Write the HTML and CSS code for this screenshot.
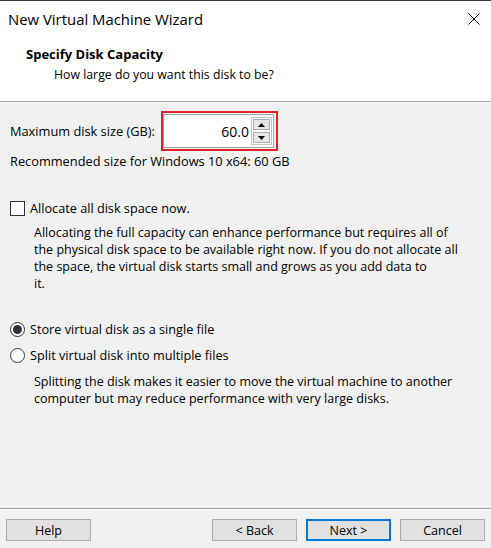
FILE: index.html
```html
<!DOCTYPE html>
<html lang="en">
<head>
<meta charset="utf-8">
<title>New Virtual Machine Wizard</title>
<link rel="stylesheet" href="styles.css">
</head>
<body>
<div class="window">
  <div class="top">
    <div class="titlebar">
      <span class="title">New Virtual Machine Wizard</span>
      <span class="close">
        <svg width="12" height="12" viewBox="0 0 12 12"><path d="M0.5 0.5 L11.5 11.5 M11.5 0.5 L0.5 11.5" stroke="#000" stroke-width="1" fill="none"/></svg>
      </span>
    </div>
    <div class="header">
      <div class="heading">Specify Disk Capacity</div>
      <div class="subheading">How large do you want this disk to be?</div>
    </div>
  </div>
  <div class="content">
    <div class="size-row">
      <span class="size-label">Maximum disk size (GB):</span>
      <div class="highlight">
        <div class="spinbox">
          <span class="value">60.0</span>
          <div class="spin-buttons">
            <div class="spin-btn"><svg width="7" height="4" viewBox="0 0 7 4"><path d="M3.5 0 L7 4 L0 4 Z" fill="#000"/></svg></div>
            <div class="spin-btn"><svg width="7" height="4" viewBox="0 0 7 4"><path d="M0 0 L7 0 L3.5 4 Z" fill="#000"/></svg></div>
          </div>
        </div>
      </div>
    </div>
    <div class="recommend">Recommended size for Windows 10 x64: 60 GB</div>
    <div class="option check-row"><span class="checkbox"></span><span>Allocate all disk space now.</span></div>
    <p class="desc">Allocating the full capacity can enhance performance but requires all of<br>the physical disk space to be available right now. If you do not allocate all<br>the space, the virtual disk starts small and grows as you add data to<br>it.</p>
    <div class="option radio-row first"><span class="radio checked"></span><span>Store virtual disk as a single file</span></div>
    <div class="option radio-row"><span class="radio"></span><span>Split virtual disk into multiple files</span></div>
    <p class="desc second">Splitting the disk makes it easier to move the virtual machine to another<br>computer but may reduce performance with very large disks.</p>
  </div>
  <div class="footer">
    <button class="btn">Help</button>
    <div class="spacer"></div>
    <button class="btn">&lt; Back</button>
    <button class="btn default">Next &gt;</button>
    <button class="btn">Cancel</button>
  </div>
</div>
</body>
</html>
```

FILE: styles.css
```css
* { box-sizing: border-box; }
html, body { margin: 0; padding: 0; }
body {
  font-family: "Open Sans", "Noto Sans", sans-serif;
  font-size: 12.5px;
  color: #000;
  background: #f0f0f0;
}
.window {
  width: 491px;
  height: 548px;
  display: flex;
  flex-direction: column;
  border-top: 1px solid #2e3b44;
  background: #f0f0f0;
}
.top {
  background: #fff;
  height: 101px;
  border-bottom: 1px solid #a0a0a0;
  box-shadow: 0 1px 0 #fff;
  flex: none;
}
.titlebar {
  height: 38px;
  display: flex;
  align-items: flex-start;
  justify-content: space-between;
  padding: 8px 11px 0 8px;
}
.title {
  font-size: 14.9px;
  line-height: 20px;
}
.close {
  display: flex;
  margin-top: 4px;
}
.header {
  padding: 7px 0 0 26px;
}
.heading {
  font-weight: bold;
  font-size: 13px;
  line-height: 17px;
}
.subheading {
  margin-top: 3px;
  padding-left: 28px;
  line-height: 17px;
  font-size: 12.3px;
}
.content {
  flex: 1;
  padding: 9px 10px 0 10px;
  line-height: 17px;
}
.size-row {
  display: flex;
  align-items: center;
  height: 40px;
}
.size-label {
  width: 151px;
  flex: none;
  font-size: 12.8px;
}
.highlight {
  width: 117px;
  height: 40px;
  border: 2px solid #e3202c;
  padding: 1px 2px 1px 0;
}
.spinbox {
  height: 100%;
  background: #fff;
  border: 1px solid #a9a9a9;
  display: flex;
  align-items: center;
  justify-content: flex-end;
  padding-right: 1px;
}
.value {
  font-size: 14px;
  margin-right: 2px;
}
.spin-buttons {
  display: flex;
  flex-direction: column;
  gap: 2px;
  border: 1px solid #c4c4c4;
  padding: 1px;
}
.spin-btn {
  width: 17px;
  height: 11px;
  background: #e6e6e6;
  border: 1px solid #adadad;
  display: flex;
  align-items: center;
  justify-content: center;
}
.spin-btn svg { display: block; }
.recommend {
  margin-top: 2px;
  font-size: 12.8px;
}
.option {
  display: flex;
  align-items: center;
  height: 17px;
  font-size: 12.7px;
}
.check-row {
  margin-top: 30px;
}
.checkbox {
  width: 15px;
  height: 15px;
  border: 1px solid #333;
  background: #fff;
  margin-right: 5px;
  flex: none;
}
.radio {
  width: 15px;
  height: 15px;
  border: 1px solid #333;
  border-radius: 50%;
  background: #fff;
  margin-right: 5px;
  flex: none;
  display: flex;
  align-items: center;
  justify-content: center;
}
.radio.checked::after {
  content: "";
  width: 9px;
  height: 9px;
  border-radius: 50%;
  background: #333;
}
.desc {
  margin: 7px 0 0 0;
  padding-left: 24px;
  white-space: nowrap;
}
.radio-row {
  margin-top: 9px;
}
.radio-row.first {
  margin-top: 29px;
}
.desc.second {
  margin-top: 9px;
}
.footer {
  flex: none;
  border-top: 1px solid #a0a0a0;
  box-shadow: inset 0 1px 0 #fff;
  padding: 10px 6px 7px 6px;
  display: flex;
  gap: 9px;
}
.spacer { flex: 1; }
.btn {
  width: 85px;
  height: 22px;
  background: #e1e1e1;
  border: 1px solid #adadad;
  font-family: inherit;
  font-size: 12.5px;
  color: #000;
  padding: 0;
  margin: 0;
}
.btn.default {
  border: 2px solid #0078d7;
}
```
